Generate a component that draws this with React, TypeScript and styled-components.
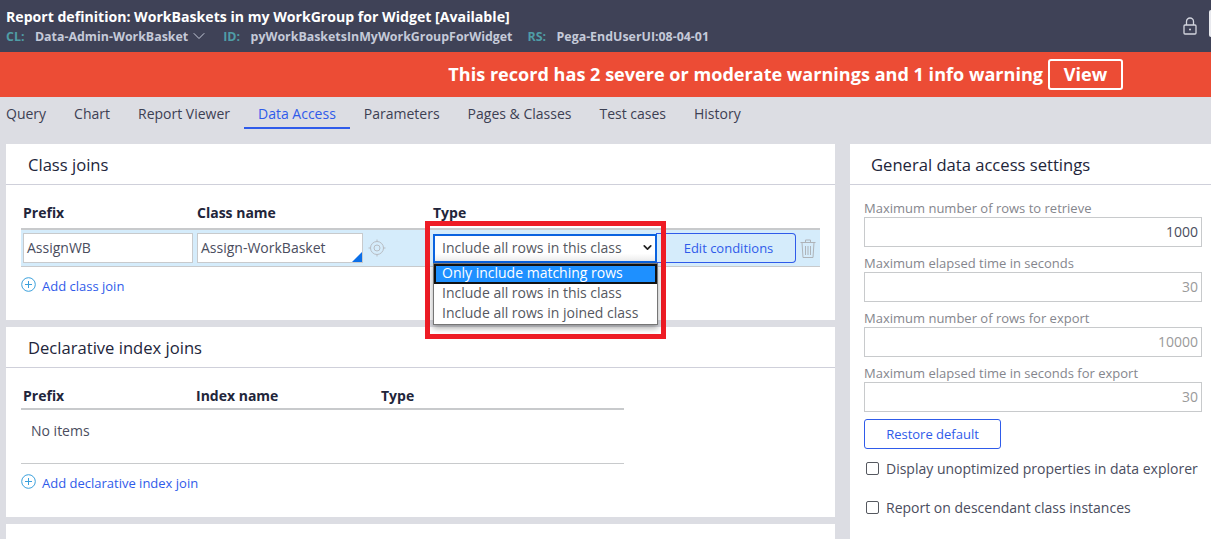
import { createGlobalStyle, styled } from 'styled-components';
import { ChevronDown } from 'lucide-react';

const GlobalStyle = createGlobalStyle`
  html, body {
    margin: 0;
    height: 539px;
    overflow: hidden;
    background: #dcdde3;
    font-family: "Open Sans", "Noto Sans", sans-serif;
    color: #3c4053;
  }
`;

const LockIcon = () => (
  <svg width="14" height="18" viewBox="0 0 14 18" fill="none" stroke="#d3d5de" strokeWidth="1.3">
    <path d="M3.5 8V4.5a3.5 3.5 0 0 1 7 0V8" />
    <rect x="1" y="8" width="12" height="9" rx="1" />
    <circle cx="7" cy="12.5" r="1" fill="#d3d5de" stroke="none" />
  </svg>
);

const PlusCircle = () => (
  <PlusSvg width="16" height="16" viewBox="0 0 16 16" fill="none" stroke="#3aa0dc" strokeWidth="1">
    <circle cx="7.5" cy="7.5" r="6.8" />
    <path d="M7.5 4v7M4 7.5h7" />
  </PlusSvg>
);

const TargetIcon = () => (
  <svg width="18" height="18" viewBox="0 0 18 18" fill="none" stroke="#b7bcc2" strokeWidth="1">
    <circle cx="9" cy="9" r="6.5" />
    <circle cx="9" cy="9" r="3" />
    <path d="M9 0.5v2M9 15.5v2M0.5 9h2M15.5 9h2" />
  </svg>
);

const TrashIcon = () => (
  <svg width="16" height="19" viewBox="0 0 16 19" fill="none" stroke="#aeb3b8" strokeWidth="1">
    <path d="M0.5 3.5h15M5.5 3.5V1h5v2.5" />
    <path d="M2 3.5l1 15h10l1-15" />
    <path d="M5.5 7v9M8 7v9M10.5 7v9" />
  </svg>
);

const App = () => {
  return (
    <Page>
      <GlobalStyle />
      <Header>
        <HeaderText>
          <Title>
            Report definition: WorkBaskets in my WorkGroup for Widget <Status>[Available]</Status>
          </Title>
          <Meta>
            <MetaKey>CL:</MetaKey>
            <MetaValue>Data-Admin-WorkBasket</MetaValue>
            <MetaChevron size={20} color="#c5cad9" strokeWidth={1.2} />
            <MetaKey $gap>ID:</MetaKey>
            <MetaValue>pyWorkBasketsInMyWorkGroupForWidget</MetaValue>
            <MetaKey $gap>RS:</MetaKey>
            <MetaValue>Pega-EndUserUI:08-04-01</MetaValue>
          </Meta>
        </HeaderText>
        <HeaderActions>
          <LockIcon />
          <CutOffButton />
        </HeaderActions>
      </Header>
      <Banner>
        This record has 2 severe or moderate warnings and 1 info warning
        <ViewButton>View</ViewButton>
      </Banner>
      <Tabs>
        {['Query', 'Chart', 'Report Viewer', 'Data Access', 'Parameters', 'Pages & Classes', 'Test cases', 'History'].map((t) => (
          <Tab key={t} $active={t === 'Data Access'}>{t}</Tab>
        ))}
      </Tabs>
      <Columns>
        <LeftColumn>
          <FirstPanel $height={176}>
            <PanelTitle>Class joins</PanelTitle>
            <PanelBody>
              <HeadRow>
                <HeadCell $width={174}>Prefix</HeadCell>
                <HeadCell $width={236}>Class name</HeadCell>
                <HeadCell>Type</HeadCell>
              </HeadRow>
              <JoinRow>
                <TextBox $width={170}>AssignWB</TextBox>
                <ClassBox>Assign-WorkBasket</ClassBox>
                <TargetSlot><TargetIcon /></TargetSlot>
                <FakeSelect>
                  Include all rows in this class
                  <ChevronDown size={13} color="#222" strokeWidth={3.2} />
                </FakeSelect>
                <EditButton>Edit conditions</EditButton>
                <TrashSlot><TrashIcon /></TrashSlot>
              </JoinRow>
              <AddLink><PlusCircle />Add class join</AddLink>
            </PanelBody>
            <Highlight />
            <Dropdown>
              <Option $selected>Only include matching rows</Option>
              <Option>Include all rows in this class</Option>
              <Option>Include all rows in joined class</Option>
            </Dropdown>
          </FirstPanel>
          <Panel $height={190}>
            <PanelTitle>Declarative index joins</PanelTitle>
            <IndexBody>
              <IndexHead>
                <HeadCell $width={173}>Prefix</HeadCell>
                <HeadCell $width={185}>Index name</HeadCell>
                <HeadCell>Type</HeadCell>
              </IndexHead>
              <NoItems>No items</NoItems>
              <AddLink><PlusCircle />Add declarative index join</AddLink>
            </IndexBody>
          </Panel>
          <Panel $height={40} />
        </LeftColumn>
        <SidePanel>
          <SideTitle>General data access settings</SideTitle>
          <SideBody>
            <FieldLabel>Maximum number of rows to retrieve</FieldLabel>
            <NumberBox>1000</NumberBox>
            <FieldLabel>Maximum elapsed time in seconds</FieldLabel>
            <NumberBox $muted>30</NumberBox>
            <FieldLabel>Maximum number of rows for export</FieldLabel>
            <NumberBox $muted>10000</NumberBox>
            <FieldLabel>Maximum elapsed time in seconds for export</FieldLabel>
            <NumberBox $muted>30</NumberBox>
            <RestoreButton>Restore default</RestoreButton>
            <CheckRow><CheckBox />Display unoptimized properties in data explorer</CheckRow>
            <CheckRow><CheckBox />Report on descendant class instances</CheckRow>
          </SideBody>
        </SidePanel>
      </Columns>
    </Page>
  );
};

const Page = styled.div`
  width: 1211px;
  height: 539px;
  overflow: hidden;
`;

const Header = styled.header`
  height: 52px;
  padding: 0 0 0 6px;
  box-sizing: border-box;
  background: #3f4257;
  display: flex;
  justify-content: space-between;
`;

const HeaderText = styled.div`
  padding-top: 7px;
`;

const Title = styled.div`
  font-size: 14.1px;
  line-height: 19px;
  font-weight: 700;
  color: #fff;
`;

const Status = styled.span`
  font-size: 14.2px;
`;

const Meta = styled.div`
  display: flex;
  align-items: center;
  height: 18px;
  margin-top: 1px;
  font-size: 12.4px;
  font-weight: 700;
`;

const MetaKey = styled.span<{ $gap?: boolean }>`
  color: #4f9da6;
  margin-right: 10.5px;
  margin-left: ${(p) => (p.$gap ? '15px' : '0')};
`;

const MetaValue = styled.span`
  color: #c5cad9;
`;

const MetaChevron = styled(ChevronDown)`
  margin: 0 -1px 0 1px;
`;

const HeaderActions = styled.div`
  display: flex;
  align-items: center;
  gap: 12px;
`;

const CutOffButton = styled.div`
  width: 2px;
  height: 27px;
  margin-bottom: 5px;
  border-radius: 2px 0 0 2px;
  background: #e8e9ee;
`;

const Banner = styled.div`
  height: 45px;
  padding-right: 88px;
  padding-bottom: 1px;
  box-sizing: border-box;
  background: #ec4c35;
  color: #fff;
  font-size: 18.09px;
  font-weight: 700;
  display: flex;
  align-items: center;
  justify-content: flex-end;
`;

const ViewButton = styled.div`
  width: 75px;
  height: 31px;
  margin-left: 5px;
  box-sizing: border-box;
  border: 2px solid #fff;
  border-radius: 3px;
  display: flex;
  align-items: center;
  justify-content: center;
`;

const Tabs = styled.nav`
  height: 47px;
  display: flex;
  align-items: flex-start;
  font-size: 14px;
`;

const Tab = styled.div<{ $active?: boolean }>`
  height: 32px;
  padding: 7px 14px 0;
  box-sizing: border-box;
  line-height: 20px;
  color: ${(p) => (p.$active ? '#2f5bea' : '#3c4053')};
  border-bottom: 2px solid ${(p) => (p.$active ? '#2f5bea' : 'transparent')};

  &:first-child {
    padding-left: 6px;
  }
`;

const Columns = styled.div`
  display: flex;
  gap: 15px;
  padding-left: 6px;
`;

const LeftColumn = styled.div`
  width: 829px;
  display: flex;
  flex-direction: column;
  gap: 7px;
`;

const Panel = styled.section<{ $height: number }>`
  position: relative;
  height: ${(p) => p.$height}px;
  background: #fff;
`;

const FirstPanel = styled(Panel)`
  z-index: 2;
`;

const PanelTitle = styled.h2`
  margin: 0;
  height: 41px;
  padding-left: 22px;
  box-sizing: border-box;
  border-bottom: 1px solid #cfd0da;
  font-size: 16.6px;
  line-height: 42px;
  font-weight: 400;
  color: #22253a;
`;

const SideTitle = styled(PanelTitle)`
  padding-left: 21px;
`;

const PanelBody = styled.div`
  padding: 14px 15px 0;
`;

const HeadRow = styled.div`
  height: 27px;
  padding: 0 0 2px 2px;
  display: flex;
  align-items: center;
`;

const HeadCell = styled.div<{ $width?: number }>`
  width: ${(p) => (p.$width ? `${p.$width}px` : 'auto')};
  font-size: 14px;
  font-weight: 700;
  color: #22253a;
`;

const JoinRow = styled.div`
  height: 39px;
  padding-left: 2px;
  box-sizing: border-box;
  background: #d5ecfb;
  border-top: 2px solid #c8cacc;
  border-bottom: 1px solid #c8cacc;
  display: flex;
  align-items: center;
`;

const TextBox = styled.div<{ $width: number }>`
  width: ${(p) => p.$width}px;
  height: 30px;
  margin-right: 4px;
  padding-left: 3px;
  box-sizing: border-box;
  background: #fff;
  border: 1px solid #c8cacc;
  font-size: 14px;
  line-height: 27px;
  color: #4a4d5e;
`;

const ClassBox = styled(TextBox).attrs({ $width: 166 })`
  position: relative;
  margin-right: 0;

  &::after {
    content: '';
    position: absolute;
    right: 0;
    bottom: 0;
    border-style: solid;
    border-width: 0 0 10px 10px;
    border-color: transparent transparent #0b6fe8 transparent;
  }
`;

const TargetSlot = styled.div`
  width: 70px;
  padding-left: 5px;
  box-sizing: border-box;
  display: flex;
`;

const FakeSelect = styled.div`
  width: 224px;
  height: 29px;
  padding: 0 1px 2px 7px;
  box-sizing: border-box;
  background: linear-gradient(#fff 70%, #ececec);
  border: 2px solid #0a63e0;
  font-size: 14px;
  color: #55585f;
  display: flex;
  align-items: center;
  justify-content: space-between;
`;

const EditButton = styled.div`
  width: 140px;
  height: 30px;
  margin-left: -1px;
  padding-left: 6px;
  box-sizing: border-box;
  border: 1px solid #2f5bea;
  border-left: none;
  border-radius: 0 4px 4px 0;
  font-size: 13px;
  color: #2f5bea;
  display: flex;
  align-items: center;
  justify-content: center;
`;

const TrashSlot = styled.div`
  margin-left: 4px;
  display: flex;
`;

const AddLink = styled.div`
  margin-top: 10px;
  display: flex;
  align-items: center;
  gap: 5px;
  font-size: 13px;
  color: #2f5bea;
`;

const PlusSvg = styled.svg`
  margin-top: -3px;
`;

const Highlight = styled.div`
  position: absolute;
  left: 419px;
  top: 77px;
  width: 241px;
  height: 118px;
  box-sizing: border-box;
  border: 5px solid #ee1c25;
  pointer-events: none;
`;

const Dropdown = styled.div`
  position: absolute;
  left: 427px;
  top: 119px;
  width: 225px;
  box-sizing: border-box;
  background: #fff;
  border: 1px solid #767676;
  box-shadow: 0 3px 6px rgba(0, 0, 0, 0.35);
`;

const Option = styled.div<{ $selected?: boolean }>`
  height: 20px;
  box-sizing: border-box;
  font-size: 14px;
  color: ${(p) => (p.$selected ? '#fff' : '#55585f')};
  background: ${(p) => (p.$selected ? '#1e90ff' : '#fff')};
  border: ${(p) => (p.$selected ? '2px solid #111' : 'none')};
  padding-left: ${(p) => (p.$selected ? '6px' : '8px')};
  line-height: ${(p) => (p.$selected ? '13px' : '18px')};
`;

const IndexBody = styled.div`
  width: 603px;
  padding: 15px 0 0 15px;
`;

const IndexHead = styled.div`
  height: 25px;
  padding-left: 2px;
  border-bottom: 2px solid #c8cacc;
  display: flex;
  align-items: center;
`;

const NoItems = styled.div`
  height: 54px;
  padding: 11px 0 0 10px;
  box-sizing: border-box;
  border-bottom: 1px solid #c8cacc;
  font-size: 14px;
  color: #4a4d5e;
`;

const SidePanel = styled.aside`
  flex: 1;
  height: 400px;
  background: #fff;
`;

const SideBody = styled.div`
  padding: 14px 9px 0 14px;
`;

const FieldLabel = styled.div`
  height: 18px;
  font-size: 13px;
  line-height: 18px;
  color: #85868d;
`;

const NumberBox = styled.div<{ $muted?: boolean }>`
  height: 30px;
  margin-bottom: 7px;
  padding-right: 3px;
  box-sizing: border-box;
  border: 1px solid #c8cacc;
  font-size: 14px;
  line-height: 28px;
  text-align: right;
  color: ${(p) => (p.$muted ? '#9a9a9a' : '#4a4d5e')};
`;

const RestoreButton = styled.div`
  width: 137px;
  height: 30px;
  box-sizing: border-box;
  border: 1px solid #2f5bea;
  border-radius: 3px;
  font-size: 13px;
  color: #2f5bea;
  display: flex;
  align-items: center;
  justify-content: center;
  margin-bottom: 10px;
`;

const CheckRow = styled.div`
  height: 39px;
  padding-left: 2px;
  display: flex;
  align-items: flex-start;
  gap: 7px;
  font-size: 14px;
  line-height: 19px;
  color: #4a4d5e;
`;

const CheckBox = styled.span`
  width: 13px;
  height: 13px;
  margin-top: 3px;
  box-sizing: border-box;
  border: 1px solid #55585f;
  border-radius: 2px;
  background: #fff;
`;

export default App;
